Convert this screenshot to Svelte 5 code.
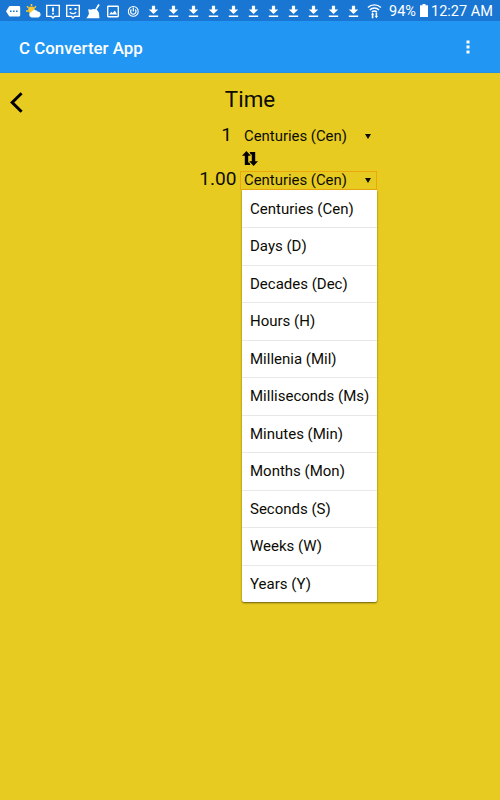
<script lang="ts">
  const downloads = Array.from({ length: 11 }, (_, i) => i);

  const units = [
    'Centuries (Cen)', 'Days (D)', 'Decades (Dec)', 'Hours (H)',
    'Millenia (Mil)', 'Milliseconds (Ms)', 'Minutes (Min)', 'Months (Mon)',
    'Seconds (S)', 'Weeks (W)', 'Years (Y)',
  ];

  let from = $state(units[0]);
  let to = $state(units[0]);
  let open = $state(true);

  function pick(unit: string) {
    to = unit;
    open = false;
  }

  function swap() {
    [from, to] = [to, from];
  }
</script>

<div class="screen">
  <div class="status">
    <!-- message -->
    <svg viewBox="0 0 20 20"><path d="M3 10.3 6 5.5q.3-.5 1-.5h8.8a1.4 1.4 0 0 1 1.4 1.4v7.8a1.4 1.4 0 0 1-1.4 1.4H7q-.7 0-1-.5z" fill="#fff" /><path d="M7 9.5h1.6v1.6H7zm3 0h1.6v1.6H10zm3 0h1.6v1.6H13z" fill="#1976d2" /></svg>
    <!-- weather -->
    <svg viewBox="0 0 20 20"><path d="M8.5 3v2M4 5.2l1.5 1.5M3 10h2M13 5.2l-1.5 1.5" stroke="#fdc830" stroke-width="1.5" /><circle cx="8.5" cy="9" r="3.4" fill="#fdc830" /><path d="M8.6 16.5a2.8 2.8 0 0 1-.2-5.5 3.7 3.7 0 0 1 6.4-.4 3 3 0 0 1 .6 5.9z" fill="#fff" /></svg>
    <svg viewBox="0 0 20 20"><path d="M3.7 4.4h12.6v11h-4.8L10 16.9l-1.5-1.5H3.7z" fill="none" stroke="#fff" stroke-width="1.4" /><path d="M9.1 6.6h1.8v4.2H9.1zm0 5.2h1.8v1.6H9.1z" fill="#fff" /></svg>
    <svg viewBox="0 0 20 20"><path d="M3.7 4.4h12.6v11h-4.8L10 16.9l-1.5-1.5H3.7z" fill="none" stroke="#fff" stroke-width="1.4" /><path d="M6.5 7h2v2h-2zm5 0h2v2h-2z" fill="#fff" /><path d="M6.8 11.2q3.2 2.8 6.4 0" fill="none" stroke="#fff" stroke-width="1.3" /></svg>
    <!-- cleaner -->
    <svg viewBox="0 0 20 20"><path d="m15.2 3 1.6 1-3.1 4.6 2 2.7c.7 2 .4 4 .8 6H3.2c1.5-1.3 2.3-3 2.8-5 .4-2 2-3.8 4-4.3l2.2.2zM5.2 8.2 8.6 8.7 5.8 12z" fill="#fff" /></svg>
    <!-- picture -->
    <svg viewBox="0 0 20 20"><rect x="4.7" y="5.2" width="10.6" height="10.6" rx=".7" fill="none" stroke="#fff" stroke-width="1.4" /><path d="m6.2 13.6 2-2.8 1.5 1.2 2.2-2.4 2.1 4z" fill="#fff" /></svg>
    <svg viewBox="0 0 20 20"><circle cx="10.3" cy="10.4" r="4.9" fill="none" stroke="#fff" stroke-width="1.1" /><path d="M8.4 8.5a2.7 2.7 0 1 0 3.8 0M10.3 6.5v4" fill="none" stroke="#fff" stroke-width="1.2" /></svg>
    {#each downloads as d (d)}
      <svg viewBox="0 0 20 20"><path d="M8.9 4.8h3.2v3.8h3.1l-4.7 4.5-4.7-4.5h3.1zM5.8 14.6h9.4V16H5.8z" fill="#fff" /></svg>
    {/each}
    <svg class="wifi" viewBox="0 0 20 20"><path d="M3.9 6.6a9.2 9.2 0 0 1 13 0M5.8 8.9a6.4 6.4 0 0 1 9.2 0M7.9 11.1a3.5 3.5 0 0 1 5 0" fill="none" stroke="#fff" stroke-width="1.4" /><path d="m8.6 11.4 1.6 2.2h-.8v3.6H7.8v-3.6H7zM12.4 17.2l-1.6-2.2h.8v-3.4h1.6V15h.8z" fill="#fff" /></svg>
    <span class="percent">94%</span>
    <svg class="battery" viewBox="0 0 8 13"><path d="M2.5 0h3v1.3H8V13H0V1.3h2.5z" fill="#fff" /></svg>
    <span class="clock">12:27 AM</span>
  </div>

  <header>
    <h1>C Converter App</h1>
    <button class="more" aria-label="More options">
      <svg viewBox="0 0 4 14"><path d="M.5.6h3v3h-3zm0 4.9h3v3h-3zm0 4.9h3v3h-3z" fill="#fff" /></svg>
    </button>
  </header>

  <main>
    <button class="back" aria-label="Back">
      <svg viewBox="0 0 13 21"><path d="M11.6 1.2 2.2 10.5l9.4 9.3" fill="none" stroke="#000" stroke-width="3" /></svg>
    </button>
    <h2>Time</h2>

    <div class="row">
      <span class="value">1</span>
      <button class="select">{from}<i></i></button>
    </div>

    <button class="swap" aria-label="Swap units" onclick={swap}>
      <svg viewBox="0 0 16 15"><path d="M4.4 0 8.8 4.8H6.2v6.7h1.2l1 2.5H2.8V4.8H0zM11.6 15l-4.4-4.8h2.6V3.5H8.6L7.6 1h5.6v9.2H16z" fill="#000" /><path d="M8 5v5" stroke="#e8cb20" stroke-width="1" /></svg>
    </button>

    <div class="row result">
      <span class="value">1.00</span>
      <div class="field">
        <button class="select focused" onclick={() => (open = !open)}>{to}<i></i></button>
        {#if open}
          <ul class="menu">
            {#each units as unit}
              <li><button onclick={() => pick(unit)}>{unit}</button></li>
            {/each}
          </ul>
        {/if}
      </div>
    </div>
  </main>
</div>

<style>
  :global(body) { margin: 0; }

  .screen {
    display: flex;
    flex-direction: column;
    width: 500px;
    height: 800px;
    overflow: hidden;
    background: #e8cb20;
    font-family: Roboto, sans-serif;
    color: #0c0b04;
  }

  svg { display: block; }

  button {
    padding: 0;
    border: 0;
    background: none;
    font: inherit;
    color: inherit;
    text-align: left;
  }

  /* Status bar */
  .status {
    display: flex;
    align-items: center;
    height: 21px;
    padding-left: 3px;
    background: #1976d2;
    color: #fff;
    font-size: 14.5px;
    white-space: nowrap;
  }

  .status svg { flex: none; width: 20px; height: 20px; }
  .status .wifi { margin-left: 1px; }
  .percent { width: 31px; margin-left: 5px; }
  .status .battery { width: 8px; height: 13px; }
  .clock { margin-left: 3px; }
  .percent, .clock { padding-top: 1px; }

  /* App bar */
  header {
    display: flex;
    align-items: center;
    justify-content: space-between;
    box-sizing: border-box;
    height: 52px;
    padding: 0 30px 0 19px;
    border-bottom: 1px solid #2590e0;
    background: #2196f3;
    color: #fff;
  }

  h1 {
    margin: 2px 0 0;
    font-size: 16.9px;
    font-weight: 500;
  }

  .more svg { width: 4px; height: 14px; }

  /* Converter */
  main {
    position: relative;
    flex: 1;
    display: flex;
    flex-direction: column;
  }

  .back { position: absolute; left: 10px; top: 19px; }
  .back svg { width: 13px; height: 21px; }

  h2 {
    margin: 12px 0 0;
    font-size: 22.4px;
    line-height: 28px;
    font-weight: 400;
    text-align: center;
  }

  .row {
    display: flex;
    align-items: center;
    height: 20px;
    margin-top: 13px;
  }

  .value {
    width: 236.5px;
    margin-right: 3.5px;
    padding-bottom: 3px;
    font-size: 19.1px;
    text-align: right;
  }

  .row:not(.result) .value { width: 232px; margin-right: 8px; }

  .select {
    display: flex;
    align-items: center;
    justify-content: space-between;
    box-sizing: border-box;
    width: 137px;
    height: 19px;
    padding: 0 5px 0 3px;
    border: 1px solid transparent;
    font-size: 14.9px;
  }

  .focused { border-color: #eda70e; }

  i {
    border: 3px solid transparent;
    border-top: 5px solid #0c0b04;
    border-bottom: 0;
  }

  .swap { width: 16px; margin: 5px 0 0 242px; }
  .swap svg { width: 16px; height: 15px; }
  .result { margin-top: 4px; }
  .field { position: relative; }

  .menu {
    position: absolute;
    top: 19px;
    left: 2px;
    width: 135px;
    margin: 0;
    padding: 1px 0 0;
    border-radius: 0 0 2px 2px;
    background: #fff;
    box-shadow: 0 1px 2px rgba(0, 0, 0, 0.55);
    list-style: none;
  }

  li {
    box-sizing: border-box;
    height: 37.5px;
    border-bottom: 1px solid #e8e8e8;
  }

  li:last-child { height: 36.5px; border-bottom: 0; }

  li button {
    width: 100%;
    height: 100%;
    padding-left: 8px;
    font-size: 15px;
    white-space: nowrap;
  }
</style>
